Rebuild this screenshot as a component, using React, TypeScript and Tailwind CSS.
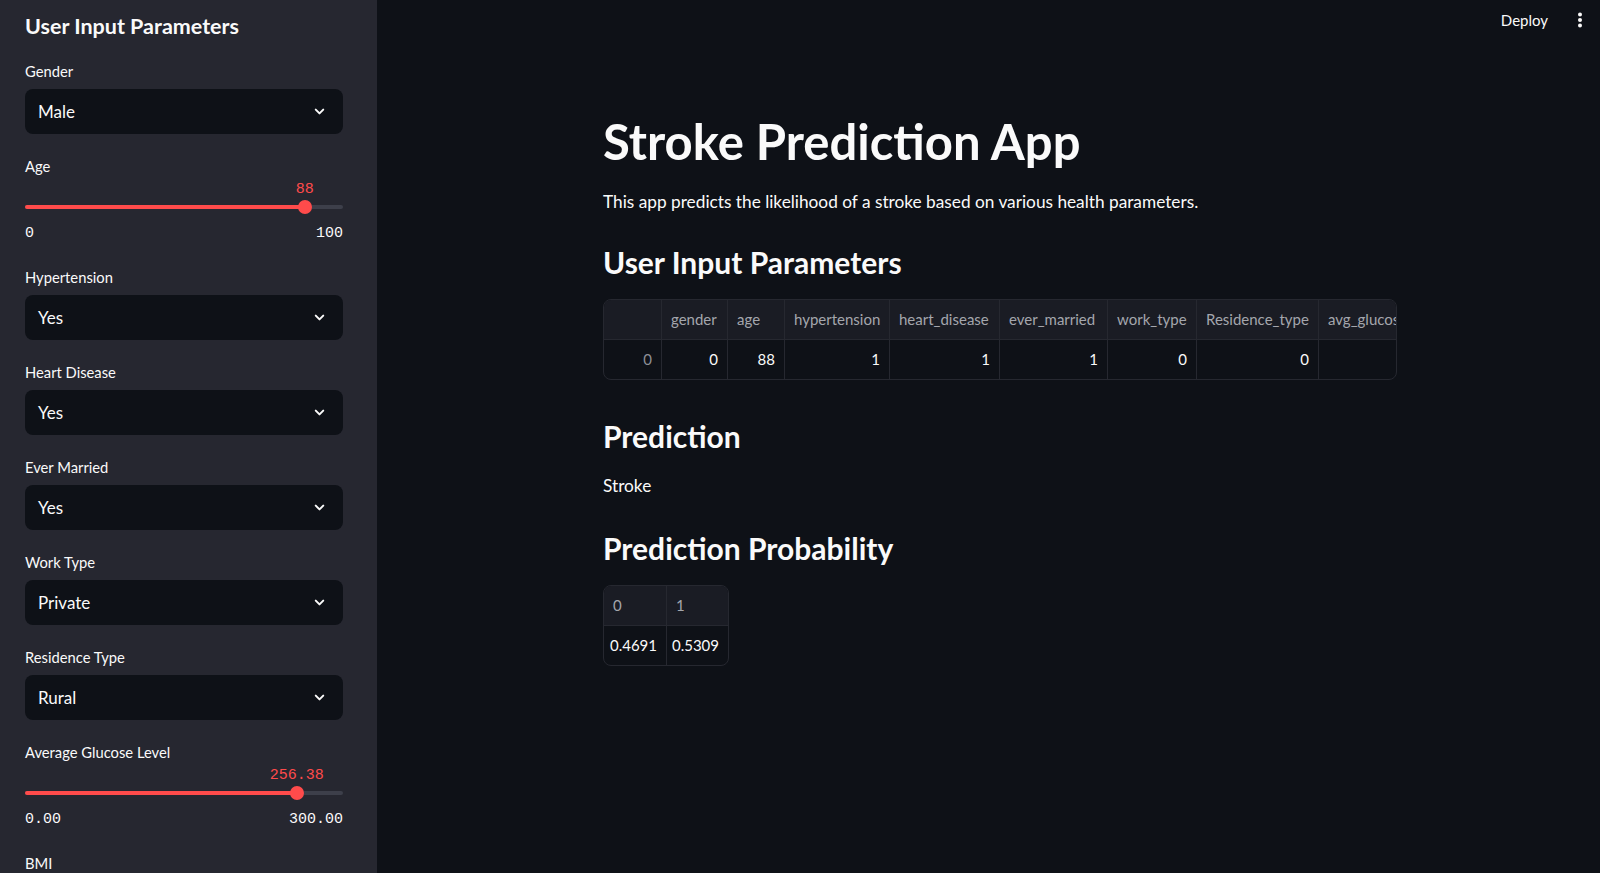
import { ChevronDown } from "lucide-react";

const sans = { fontFamily: "Lato, 'Noto Sans', sans-serif" };
const mono = { fontFamily: "'Liberation Mono', 'DejaVu Sans Mono', monospace" };

function Select({ label, value }: { label: string; value: string }) {
  return (
    <div>
      <div className="mb-[7px] text-[14.75px] leading-[22px] text-[#fafafa]">{label}</div>
      <div className="flex h-[45px] items-center justify-between rounded-[8px] bg-[#0e1117] pl-[13px] pr-[16px]">
        <span className="text-[17px] text-[#fafafa]">{value}</span>
        <ChevronDown size={15} strokeWidth={3.2} className="text-[#fafafa]" />
      </div>
    </div>
  );
}

function Slider({ label, value, min, max, pct }: { label: string; value: string; min: string; max: string; pct: number }) {
  return (
    <div>
      <div className="text-[14.75px] leading-[22px] text-[#fafafa]">{label}</div>
      <div className="relative h-[22px]">
        <span
          className="absolute top-[2px] -translate-x-1/2 text-[15px] leading-[22px] text-[#ff4b4b]"
          style={{ ...mono, left: `${pct}%` }}
        >
          {value}
        </span>
      </div>
      <div className="relative flex h-[16px] items-center">
        <div className="h-[4px] w-full rounded-full bg-[#3d3f4a]">
          <div className="h-full rounded-full bg-[#ff4b4b]" style={{ width: `${pct}%` }} />
        </div>
        <div
          className="absolute top-[1px] h-[14px] w-[14px] -translate-x-1/2 rounded-full bg-[#ff4b4b]"
          style={{ left: `${pct}%` }}
        />
      </div>
      <div className="mt-[8px] flex justify-between text-[15px] leading-[22px] text-[#fafafa]" style={mono}>
        <span>{min}</span>
        <span>{max}</span>
      </div>
    </div>
  );
}

type Col = { name: string; w: number; val: string };

const inputCols: Col[] = [
  { name: "", w: 57, val: "0" },
  { name: "gender", w: 66, val: "0" },
  { name: "age", w: 57, val: "88" },
  { name: "hypertension", w: 105, val: "1" },
  { name: "heart_disease", w: 110, val: "1" },
  { name: "ever_married", w: 108, val: "1" },
  { name: "work_type", w: 89, val: "0" },
  { name: "Residence_type", w: 122, val: "0" },
  { name: "avg_glucose_level", w: 78, val: "" },
];

function DataTable({ cols, indexFirst }: { cols: Col[]; indexFirst: boolean }) {
  return (
    <div className="inline-flex overflow-hidden rounded-[8px] border border-[#262830] text-[15px]">
      {cols.map((c, i) => (
        <div
          key={i}
          className={`shrink-0 ${i > 0 ? "border-l border-[#262830]" : ""}`}
          style={{ width: c.w }}
        >
          <div className="flex h-[40px] items-center overflow-hidden whitespace-nowrap border-b border-[#262830] bg-[#1a1c24] px-[9px] text-[#a4a6ad]">
            {c.name}
          </div>
          <div
            className={`flex h-[39px] items-center justify-end px-[9px] ${
              indexFirst && i === 0 ? "text-[#8d8f96]" : "text-[#fafafa]"
            }`}
          >
            {c.val}
          </div>
        </div>
      ))}
    </div>
  );
}

export default function App() {
  return (
    <div className="flex h-screen overflow-hidden bg-[#0e1117] text-[#fafafa]" style={sans}>
      <aside className="w-[377px] shrink-0 bg-[#262730] pl-[25px] pt-[10px]">
        <div className="w-[318px]">
          <h2 className="text-[21.5px] font-bold leading-[32px]">User Input Parameters</h2>
          <div className="mt-[18px] flex flex-col gap-[21px]">
            <Select label="Gender" value="Male" />
            <Slider label="Age" value="88" min="0" max="100" pct={88} />
            <Select label="Hypertension" value="Yes" />
            <Select label="Heart Disease" value="Yes" />
            <Select label="Ever Married" value="Yes" />
            <Select label="Work Type" value="Private" />
            <Select label="Residence Type" value="Rural" />
            <Slider label="Average Glucose Level" value="256.38" min="0.00" max="300.00" pct={85.46} />
            <div className="text-[14.75px] leading-[22px]">BMI</div>
          </div>
        </div>
      </aside>

      <main className="flex min-w-0 flex-1 flex-col">
        <header className="flex h-[40px] shrink-0 items-center justify-end pr-[18px]">
          <span className="text-[15px]">Deploy</span>
          <svg width="4" height="16" viewBox="0 0 4 16" className="ml-[30px]" fill="#fafafa">
            <circle cx="2" cy="2.5" r="2" />
            <circle cx="2" cy="8" r="2" />
            <circle cx="2" cy="13.5" r="2" />
          </svg>
        </header>

        <div className="pl-[226px] pt-[71px]">
          <h1 className="text-[49px] font-bold leading-[60px]">Stroke Prediction App</h1>
          <p className="mt-[17px] text-[17.25px] leading-[28px]">
            This app predicts the likelihood of a stroke based on various health parameters.
          </p>
          <h2 className="mt-[26px] text-[30px] font-bold leading-[40px]">User Input Parameters</h2>
          <div className="mt-[17px]">
            <DataTable cols={inputCols} indexFirst />
          </div>
          <h2 className="mt-[36px] text-[30px] font-bold leading-[40px]">Prediction</h2>
          <p className="mt-[16px] text-[17.25px] leading-[28px]">Stroke</p>
          <h2 className="mt-[28px] text-[30px] font-bold leading-[40px]">Prediction Probability</h2>
          <div className="mt-[17px]">
            <DataTable
              cols={[
                { name: "0", w: 62, val: "0.4691" },
                { name: "1", w: 62, val: "0.5309" },
              ]}
              indexFirst={false}
            />
          </div>
        </div>
      </main>
    </div>
  );
}
